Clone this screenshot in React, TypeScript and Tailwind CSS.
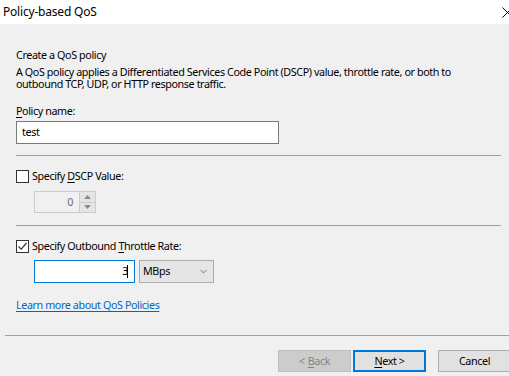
import { ChevronDown } from "lucide-react";

const font = { fontFamily: '"Segoe UI", "Noto Sans", "Liberation Sans", sans-serif' };

function Checkbox({ checked }: { checked?: boolean }) {
  return (
    <span className="flex h-[13px] w-[13px] shrink-0 items-center justify-center border border-[#333333] bg-white">
      {checked && (
        <svg width="11" height="11" viewBox="0 0 11 11">
          <path d="M1.5 5.5 L4.2 8.2 L9.5 2" fill="none" stroke="#333333" strokeWidth="1.2" />
        </svg>
      )}
    </span>
  );
}

function Button({
  children,
  variant,
}: {
  children: React.ReactNode;
  variant: "disabled" | "default" | "normal";
}) {
  const cls =
    variant === "disabled"
      ? "border border-[#bfbfbf] bg-[#cccccc] text-[#838383]"
      : variant === "default"
        ? "border-2 border-[#0078d7] bg-[#e1e1e1] text-black"
        : "border border-[#adadad] bg-[#e1e1e1] text-black";
  return (
    <div className={`flex h-[22px] w-[73px] shrink-0 items-center justify-center ${cls}`}>
      {children}
    </div>
  );
}

export default function App() {
  return (
    <div className="h-[376px] w-[509px] overflow-hidden bg-[#f0f0f0] text-black" style={font}>
      <div className="flex h-[24px] items-center justify-between bg-white pl-[3px]">
        <span className="text-[12px] tracking-[-0.2px]">Policy-based QoS</span>
        <svg width="11" height="11" viewBox="0 0 11 11" className="-mr-[4px]">
          <path d="M0.5 0.5 L10.5 10.5 M10.5 0.5 L0.5 10.5" stroke="#000" strokeWidth="1" />
        </svg>
      </div>

      <div className="flex flex-col whitespace-nowrap px-[16px] text-[10.75px] tracking-[-0.4px]">
        <p className="mt-[24px] h-[14px] leading-[14px]">Create a QoS policy</p>
        <p className="mt-[4px] leading-[12px]">
          A QoS policy applies a Differentiated Services Code Point (DSCP) value, throttle rate, or both to
          <br />
          outbound TCP, UDP, or HTTP response traffic.
        </p>

        <p className="mt-[14px] h-[14px] leading-[14px]">
          <span className="underline underline-offset-2">P</span>olicy name:
        </p>
        <div className="mt-[3px] flex h-[23px] w-[263px] items-center border border-[#7a7a7a] bg-white pl-[5px]">
          test
        </div>

        <div className="-mr-[8px] mt-[11px] h-px bg-[#a0a0a0]" />

        <div className="mt-[14px] flex h-[13px] items-center gap-[3px]">
          <Checkbox />
          <span>
            Specify <span className="underline underline-offset-2">D</span>SCP Value:
          </span>
        </div>
        <div className="ml-[18px] mt-[8px] flex h-[22px] w-[62px] border border-[#cccccc]">
          <div className="flex flex-1 items-center justify-end pr-[6px] text-[#6d6d6d]">0</div>
          <div className="flex w-[16px] flex-col border-l border-[#cccccc]">
            <div className="flex flex-1 items-center justify-center border-b border-[#cccccc] bg-[#e5e5e5]">
              <svg width="7" height="4" viewBox="0 0 7 4">
                <path d="M0 4 L3.5 0 L7 4 Z" fill="#8a8a8a" />
              </svg>
            </div>
            <div className="flex flex-1 items-center justify-center bg-[#e5e5e5]">
              <svg width="7" height="4" viewBox="0 0 7 4">
                <path d="M0 0 L3.5 4 L7 0 Z" fill="#8a8a8a" />
              </svg>
            </div>
          </div>
        </div>

        <div className="-mr-[8px] mt-[12px] h-px bg-[#a0a0a0]" />

        <div className="mt-[14px] flex h-[13px] items-center gap-[3px]">
          <Checkbox checked />
          <span>
            Specify Outbound <span className="underline underline-offset-2">T</span>hrottle Rate:
          </span>
        </div>
        <div className="ml-[18px] mt-[7px] flex h-[23px] gap-[4px]">
          <div className="flex w-[101px] items-center justify-end border border-[#0078d7] bg-white pr-[6px]">
            <span>3</span>
            <span className="-ml-[1px] h-[13px] w-px bg-black" />
          </div>
          <div className="flex w-[75px] items-center justify-between border border-[#adadad] bg-[#e5e5e5] pl-[3px] pr-[4px]">
            <span>MBps</span>
            <ChevronDown size={11} strokeWidth={1.5} color="#444" />
          </div>
        </div>

        <a className="mt-[15px] h-[14px] self-start leading-[14px] text-[#0066cc] underline underline-offset-2">
          Learn more about QoS Policies
        </a>

        <div className="-ml-[11px] -mr-[16px] mt-[23px] h-px bg-[#a0a0a0]" />

        <div className="mt-[14px] flex gap-[2px] pl-[262px]">
          <Button variant="disabled">
            &lt; <span className="ml-[3px] underline underline-offset-2">B</span>ack
          </Button>
          <Button variant="default">
            <span className="underline underline-offset-2">N</span>ext &gt;
          </Button>
          <div className="ml-[10px]">
            <Button variant="normal">Cancel</Button>
          </div>
        </div>
      </div>
    </div>
  );
}
